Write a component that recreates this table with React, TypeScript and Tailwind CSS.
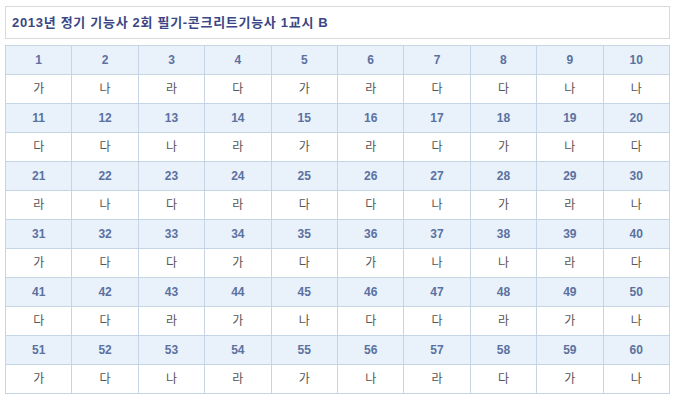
import { Fragment } from "react";

const answers = [
  ["가", "나", "라", "다", "가", "라", "다", "다", "나", "나"],
  ["다", "다", "나", "라", "가", "라", "다", "가", "나", "다"],
  ["라", "나", "다", "라", "다", "다", "나", "가", "라", "나"],
  ["가", "다", "다", "가", "다", "가", "나", "나", "라", "다"],
  ["다", "다", "라", "가", "나", "다", "다", "라", "가", "나"],
  ["가", "다", "나", "라", "가", "나", "라", "다", "가", "나"],
];

const App = () => {
  return (
    <div className="bg-white w-[675px] h-[401px] pt-[6px] px-[5px] text-[12px]"
      style={{ fontFamily: '"Liberation Sans", "Noto Sans CJK KR", sans-serif' }}>
      <div className="h-[33px] border border-[#d9d9d9] flex items-center pl-[6px] font-bold text-[13px] tracking-[0.7px] text-[#3b4785]">
        2013년 정기 기능사 2회 필기-콘크리트기능사 1교시 B
      </div>
      <table className="mt-[6px] w-[665px] border-collapse table-fixed">
        <tbody>
          {answers.map((row, i) => (
            <Fragment key={i}>
              <tr className="h-[29px] bg-[#e9f1fb]">
                {row.map((_, j) => (
                  <td key={j} className="border border-[#c6d5e6] text-center font-bold text-[#5b719f]">
                    {i * 10 + j + 1}
                  </td>
                ))}
              </tr>
              <tr className="h-[29px] bg-white">
                {row.map((a, j) => (
                  <td key={j} className="border border-[#c6d5e6] text-center text-[#555555]">
                    {a}
                  </td>
                ))}
              </tr>
            </Fragment>
          ))}
        </tbody>
      </table>
    </div>
  );
};

export default App
